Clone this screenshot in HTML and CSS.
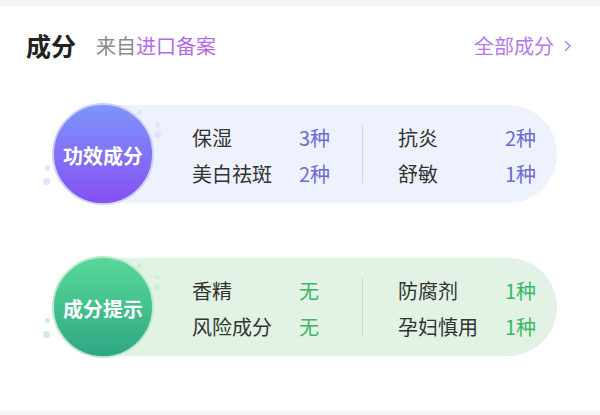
FILE: index.html
```html
<!DOCTYPE html>
<html lang="zh-CN">
<head>
<meta charset="utf-8">
<link rel="stylesheet" href="styles.css">
</head>
<body>
<div class="topbar"></div>
<div class="header">
  <div class="title-group">
    <span class="title">成分</span>
    <span class="sub">来自<span class="accent">进口备案</span></span>
  </div>
  <div class="more">全部成分<svg class="chev" width="8" height="12" viewBox="0 0 8 12"><path d="M1.5 1.5 L6 6 L1.5 10.5" fill="none" stroke="#b57ae8" stroke-width="1.4" stroke-linecap="round" stroke-linejoin="round"/></svg></div>
</div>
<div class="cards">
  <div class="card card-blue">
    <span class="dot d1"></span><span class="dot d2"></span><span class="dot d3"></span><span class="dot d4"></span><span class="dot d5"></span>
    <div class="badge">功效成分</div>
    <div class="cols">
      <div class="col col-left">
        <span class="lbl">保湿</span><span class="val">3种</span>
        <span class="lbl">美白祛斑</span><span class="val">2种</span>
      </div>
      <div class="divider"></div>
      <div class="col col-right">
        <span class="lbl">抗炎</span><span class="val">2种</span>
        <span class="lbl">舒敏</span><span class="val">1种</span>
      </div>
    </div>
  </div>
  <div class="card card-green">
    <span class="dot d1"></span><span class="dot d2"></span><span class="dot d3"></span><span class="dot d4"></span><span class="dot d5"></span>
    <div class="badge">成分提示</div>
    <div class="cols">
      <div class="col col-left">
        <span class="lbl">香精</span><span class="val">无</span>
        <span class="lbl">风险成分</span><span class="val">无</span>
      </div>
      <div class="divider"></div>
      <div class="col col-right">
        <span class="lbl">防腐剂</span><span class="val">1种</span>
        <span class="lbl">孕妇慎用</span><span class="val">1种</span>
      </div>
    </div>
  </div>
</div>
<div class="bottombar"></div>
</body>
</html>
```

FILE: styles.css
```css
* { box-sizing: border-box; }
html, body {
  margin: 0;
  padding: 0;
  background: #ffffff;
  width: 600px;
  height: 415px;
  overflow: hidden;
  font-family: "Noto Sans CJK SC", "Noto Sans", sans-serif;
}
.topbar {
  height: 6px;
  background: #f5f5f5;
}
.header {
  height: 79px;
  padding: 0 28px 0 26px;
  display: flex;
  align-items: center;
  justify-content: space-between;
}
.title-group {
  display: flex;
  align-items: center;
  gap: 20px;
}
.title {
  font-size: 25px;
  font-weight: 700;
  color: #222222;
  line-height: 1;
}
.sub {
  font-size: 20px;
  color: #8a8a8a;
  line-height: 1;
}
.accent { color: #b06de6; }
.more {
  display: flex;
  align-items: center;
  gap: 10px;
  font-size: 20px;
  color: #b27ae9;
  line-height: 1;
}
.cards {
  padding-top: 20px;
  display: flex;
  flex-direction: column;
  gap: 55px;
}
.card {
  position: relative;
  margin-left: 52px;
  width: 505px;
  height: 98px;
  border-radius: 0 49px 49px 0;
  display: flex;
  align-items: center;
}
.card-blue { background: linear-gradient(90deg, transparent 51px, #edf2fe 51px); }
.card-green { background: linear-gradient(90deg, transparent 51px, #e2f3e5 51px); }
.badge {
  position: relative;
  z-index: 1;
  flex: none;
  width: 102px;
  height: 102px;
  margin: -2px 0 -2px 0;
  border-radius: 50%;
  display: flex;
  align-items: center;
  justify-content: center;
  color: #ffffff;
  font-size: 20px;
  font-weight: 700;
  line-height: 1;
  padding-top: 3px;
}
.card-blue .badge {
  background: linear-gradient(180deg, #7d95fb 0%, #8650f2 100%);
  border: 2px solid #c9d2fb;
}
.card-green .badge {
  background: linear-gradient(180deg, #57d998 0%, #2ea784 100%);
  border: 2px solid #bfe8cc;
}
.dot {
  position: absolute;
  border-radius: 50%;
}
.card-blue .dot { background: #dde4fb; }
.card-green .dot { background: #cdeedb; }
.d1 { left: 85px; top: 5px; width: 5px; height: 5px; }
.d2 { left: 103px; top: 17px; width: 5px; height: 5px; }
.d3 { left: 102px; top: 26px; width: 7px; height: 7px; }
.d4 { left: -7px; top: 60px; width: 5px; height: 5px; }
.d5 { left: -9px; top: 73px; width: 7px; height: 7px; }
.cols {
  display: flex;
  align-items: center;
  padding-left: 38px;
  padding-top: 4px;
}
.col {
  display: grid;
  grid-template-columns: 107px auto;
  grid-auto-rows: 36px;
  align-items: center;
  font-size: 20px;
  line-height: 1;
  white-space: nowrap;
}
.col-left { width: 170px; }
.col-right { padding-left: 35px; }
.lbl { color: #333333; }
.card-blue .val { color: #6e6ad2; }
.card-green .val { color: #3cb766; }
.divider {
  width: 1px;
  height: 58px;
  margin-top: -4px;
}
.card-blue .divider { background: #cdd6f4; }
.card-green .divider { background: #bde2c6; }
.bottombar {
  position: absolute;
  left: 0;
  top: 411px;
  width: 600px;
  height: 4px;
  background: #f5f5f5;
}
```
